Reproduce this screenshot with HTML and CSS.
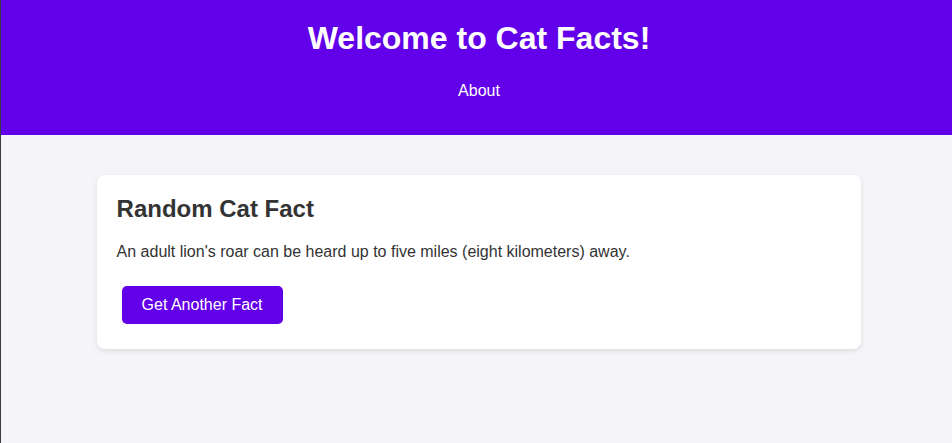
FILE: index.html
```html
<!DOCTYPE html>
<html lang="en">
<head>
<meta charset="utf-8">
<title>Cat Facts</title>
<link rel="stylesheet" href="styles.css">
</head>
<body>
<div class="page">
  <header class="site-header">
    <h1 class="site-title">Welcome to Cat Facts!</h1>
    <nav class="site-nav">
      <a href="#" class="nav-link">About</a>
    </nav>
  </header>
  <main class="content">
    <section class="card">
      <h2 class="card-title">Random Cat Fact</h2>
      <p class="fact">An adult lion's roar can be heard up to five miles (eight kilometers) away.</p>
      <button class="btn" type="button">Get Another Fact</button>
    </section>
  </main>
</div>
</body>
</html>
```
FILE: styles.css
```css
html, body {
  margin: 0;
  padding: 0;
  overflow: hidden;
  height: 100%;
}

body {
  font-family: "Liberation Sans", Arial, sans-serif;
  background: #f4f4f9;
  color: #333333;
}

.page {
  width: 956px;
  min-height: 100%;
  border-left: 1px solid #3a3d3f;
  background: #f4f4f9;
}

.site-header {
  background: #6200ea;
  color: #ffffff;
  text-align: center;
  padding: 20px 0 35px;
}

.site-title {
  margin: 0;
  font-size: 32px;
  font-weight: bold;
}

.site-nav {
  margin-top: 25px;
}

.nav-link {
  color: #ffffff;
  text-decoration: none;
  font-size: 16px;
}

.content {
  padding-top: 40px;
}

.card {
  width: 80%;
  margin: 0 auto;
  box-sizing: border-box;
  background: #ffffff;
  border-radius: 8px;
  box-shadow: 0 2px 5px rgba(0, 0, 0, 0.1);
  padding: 20px;
}

.card-title {
  margin: 0 0 20px;
  font-size: 24px;
  font-weight: bold;
  color: #333333;
}

.fact {
  margin: 0 0 16px;
  font-size: 16px;
  color: #333333;
}

.btn {
  display: block;
  margin: 25px 5px 5px;
  margin-top: 25px;
  background: #6200ea;
  color: #ffffff;
  border: none;
  border-radius: 5px;
  padding: 10px 20px;
  font-family: "Liberation Sans", Arial, sans-serif;
  font-size: 16px;
  line-height: normal;
  cursor: pointer;
}
```
